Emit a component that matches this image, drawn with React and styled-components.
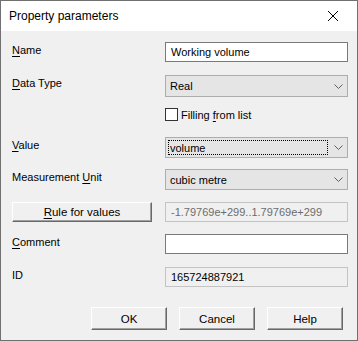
import styled, { createGlobalStyle } from "styled-components";

const GlobalStyle = createGlobalStyle`
  html, body {
    margin: 0;
    padding: 0;
    background: #f0f0f0;
  }
  * {
    box-sizing: border-box;
  }
`;

const Window = styled.div`
  width: 358px;
  height: 341px;
  border: 1px solid #707070;
  display: flex;
  flex-direction: column;
  font-family: "Liberation Sans", Arial, sans-serif;
  font-size: 11px;
  color: #000;
  background: #f0f0f0;
`;

const TitleBar = styled.div`
  height: 30px;
  background: #fff;
  display: flex;
  align-items: center;
  justify-content: space-between;
  padding-left: 8px;
  font-size: 12px;
`;

const CloseButton = styled.div`
  width: 46px;
  height: 30px;
  display: flex;
  align-items: center;
  justify-content: center;
  margin-right: 1px;
`;

const Content = styled.div`
  flex: 1;
  padding: 11px 8px 0 11px;
  display: flex;
  flex-direction: column;
`;

const Row = styled.div`
  display: grid;
  grid-template-columns: 140px 183px;
  column-gap: 13px;
  align-items: start;
  margin-top: ${(p) => p.$gap || 0}px;
  height: ${(p) => p.$h}px;
`;

const Label = styled.div`
  padding-top: 1px;
  line-height: 14px;
  white-space: nowrap;
`;

const Key = styled.span`
  text-decoration: underline;
  text-underline-offset: 2px;
`;

const TextBox = styled.div`
  height: ${(p) => p.$h || 20}px;
  border: 1px solid ${(p) => (p.$readonly ? "#c4c4c4" : "#7a7a7a")};
  background: ${(p) => (p.$readonly ? "#f0f0f0" : "#fff")};
  color: ${(p) => (p.$disabled ? "#6d6d6d" : "#000")};
  padding-left: 5px;
  display: flex;
  align-items: center;
  white-space: nowrap;
  overflow: hidden;
`;

const Select = styled.div`
  height: ${(p) => p.$h || 21}px;
  border: 1px solid #adadad;
  background: #e5e5e5;
  display: flex;
  align-items: center;
  padding: 2px 4px 2px 2px;
  gap: 6px;
`;

const SelectText = styled.div`
  flex: 1;
  height: 100%;
  display: flex;
  align-items: center;
  padding-left: 1px;
  border: 1px dotted ${(p) => (p.$focus ? "#000" : "transparent")};
`;

const CheckRow = styled.label`
  display: flex;
  align-items: center;
  gap: 3px;
  height: 13px;
  white-space: nowrap;
`;

const Box = styled.span`
  width: 13px;
  height: 13px;
  border: 1px solid #333;
  background: #fff;
`;

const Button = styled.div`
  width: ${(p) => p.$w || 76}px;
  height: ${(p) => p.$h || 23}px;
  background: #f0f0f0;
  border-top: 1px solid #fff;
  border-left: 1px solid #fff;
  border-right: 1px solid #696969;
  border-bottom: 1px solid #696969;
  box-shadow: inset -1px -1px 0 #a0a0a0;
  display: flex;
  align-items: center;
  justify-content: center;
  font-size: 11.5px;
  white-space: nowrap;
`;

const Footer = styled.div`
  display: flex;
  justify-content: flex-end;
  gap: 12px;
  margin-top: 20px;
  padding-right: 6px;
`;

const Chevron = () => (
  <svg width="9" height="5" viewBox="0 0 9 5">
    <path d="M0.5 0.5 L4.5 4.5 L8.5 0.5" fill="none" stroke="#606060" strokeWidth="1" />
  </svg>
);

const CloseIcon = () => (
  <svg width="10" height="10" viewBox="0 0 10 10">
    <path d="M0 0 L10 10 M10 0 L0 10" stroke="#000" strokeWidth="1" />
  </svg>
);

const App = () => {
  return (
    <>
      <GlobalStyle />
      <Window>
        <TitleBar>
          Property parameters
          <CloseButton>
            <CloseIcon />
          </CloseButton>
        </TitleBar>
        <Content>
          <Row $h={20}>
            <Label>
              <Key>N</Key>ame
            </Label>
            <TextBox>Working volume</TextBox>
          </Row>
          <Row $h={22} $gap={13}>
            <Label>
              <Key>D</Key>ata Type
            </Label>
            <Select $h={22}>
              <SelectText>Real</SelectText>
              <Chevron />
            </Select>
          </Row>
          <Row $h={13} $gap={11}>
            <span />
            <CheckRow>
              <Box />
              <span>
                Filling <Key>f</Key>rom list
              </span>
            </CheckRow>
          </Row>
          <Row $h={21} $gap={16}>
            <Label>
              <Key>V</Key>alue
            </Label>
            <Select>
              <SelectText $focus>volume</SelectText>
              <Chevron />
            </Select>
          </Row>
          <Row $h={21} $gap={11}>
            <Label>
              Measurement <Key>U</Key>nit
            </Label>
            <Select>
              <SelectText>cubic metre</SelectText>
              <Chevron />
            </Select>
          </Row>
          <Row $h={20} $gap={12}>
            <Button $w={140} $h={20}>
              <span>
                <Key>R</Key>ule for values
              </span>
            </Button>
            <TextBox $readonly $disabled>
              -1.79769e+299..1.79769e+299
            </TextBox>
          </Row>
          <Row $h={20} $gap={12}>
            <Label>
              <Key>C</Key>omment
            </Label>
            <TextBox />
          </Row>
          <Row $h={20} $gap={13}>
            <Label>ID</Label>
            <TextBox $readonly>165724887921</TextBox>
          </Row>
          <Footer>
            <Button>OK</Button>
            <Button>Cancel</Button>
            <Button>Help</Button>
          </Footer>
        </Content>
      </Window>
    </>
  );
};

export default App;
